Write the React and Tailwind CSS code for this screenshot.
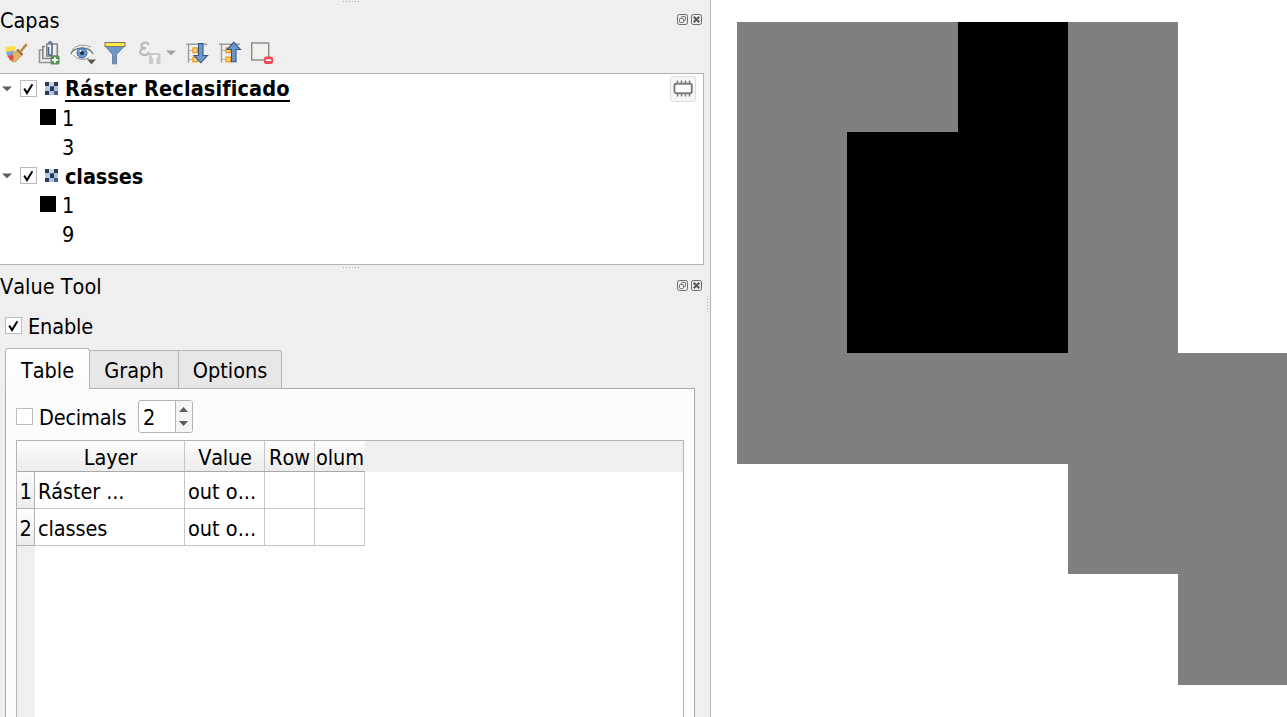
import React from "react";

const FONT = "font-['DejaVu_Sans_Condensed','DejaVu_Sans',sans-serif] [font-stretch:condensed] [font-kerning:none]";

function Check({ on }) {
  return (
    <span className="flex h-[17px] w-[17px] shrink-0 items-center justify-center border border-[#bcbcbc] bg-white">
      {on && (
        <svg width="15" height="15" viewBox="0 0 15 15">
          <path d="M3.2 7.6 L6 12 L11.4 3.2" fill="none" stroke="#000" strokeWidth="2" />
        </svg>
      )}
    </span>
  );
}

function RasterIcon() {
  const cells = [
    [0, 0, 4, 4, "#2e3a4e"], [4, 0, 5, 4, "#c3d5eb"], [9, 0, 4, 4, "#2e3a4e"],
    [0, 4, 5, 5, "#b3cae8"], [5, 5, 4, 4, "#2e3a4e"], [5, 4, 4, 1, "#53698a"], [9, 4, 4, 5, "#a9c3e4"],
    [0, 9, 4, 4, "#2e3a4e"], [4, 9, 5, 4, "#a9c3e4"], [9, 9, 4, 4, "#4a5f80"],
  ];
  return (
    <svg width="13" height="13" viewBox="0 0 13 13" className="shrink-0">
      {cells.map(([x, y, w, h, f], i) => (
        <rect key={i} x={x} y={y} width={w} height={h} fill={f} />
      ))}
    </svg>
  );
}

function DockButtons() {
  return (
    <div className="flex gap-[3px] pb-[2px]">
      <svg width="11" height="11" viewBox="0 0 11 11" fill="none" stroke="#6f6b67">
        <rect x=".5" y=".5" width="10" height="10" rx="1.8" />
        <rect x="4.5" y="2.5" width="4" height="4" rx=".8" />
        <rect x="2.5" y="4.5" width="4" height="4" rx=".8" fill="#efefef" />
      </svg>
      <svg width="11" height="11" viewBox="0 0 11 11" fill="none" stroke="#6f6b67">
        <rect x=".5" y=".5" width="10" height="10" rx="1.8" />
        <path d="M2.7 2.7 L8.3 8.3 M8.3 2.7 L2.7 8.3" stroke="#5e5a57" strokeWidth="2.1" />
      </svg>
    </div>
  );
}

function Grip({ vertical }) {
  return (
    <div className={vertical ? "flex flex-col gap-[2px]" : "flex gap-[2px] pr-[2px]"}>
      {[0, 1, 2, 3, 4, 5].map((i) => (
        <i key={i} className="block h-px w-px bg-[#a8a8a8]" />
      ))}
    </div>
  );
}

function Toolbar() {
  return (
    <div className="flex h-[38px] items-center pb-[2px] pl-1">
      <svg width="24" height="24" viewBox="0 0 24 24">
        <path d="M1 6 L11 5 L12 8 L9 11 L2 11Z" fill="#fbe04a" />
        <path d="M2 11 L10 9.5 L9 14 L3.5 15.5Z" fill="#7da7d8" />
        <path d="M3.5 15 L9 13.5 L11 18 L7 20 Q5 18 3.5 15Z" fill="#e8484c" />
        <path d="M8.5 13 L14 8.5 L18.5 13 L13 19.5 Q10 21.5 8 20.5 Q11 17 8.5 13Z" fill="#e5b56b" stroke="#c28b3e" strokeWidth=".8" />
        <path d="M13 8.5 L18.5 14" stroke="#8a6a40" strokeWidth="1.8" />
        <path d="M16.5 10.5 L22 4" stroke="#c18845" strokeWidth="2.6" strokeLinecap="round" />
      </svg>
      <svg width="24" height="26" viewBox="0 0 24 26" className="ml-[9px]" fill="none">
        <path d="M5 10 H2.5 V22.5 H15" stroke="#949494" strokeWidth="1.6" />
        <path d="M8 6.5 H5.8 V18.5 H18" stroke="#858585" strokeWidth="1.6" />
        <path d="M10 4 H20.3 V16 H9.8 V4 Z" stroke="#858585" strokeWidth="1.6" />
        <path d="M11.5 7 V14 Q13.3 16.6 15 14 V3.5 Q13 0 11.5 3.5" stroke="#44658e" strokeWidth="1.5" />
        <rect x="13.5" y="15.5" width="9" height="9" rx="1.5" fill="#59935a" />
        <path d="M18 17.2 V22.8 M15.2 20 H20.8" stroke="#fff" strokeWidth="1.8" />
      </svg>
      <svg width="27" height="24" viewBox="0 0 27 24" className="ml-[9px]" fill="none">
        <path d="M1 11 Q11 2 23 12 Q12 21 2 13Z" fill="#fafafa" />
        <path d="M1 13 Q2 8 12 7 Q20 7 23 13" stroke="#777" strokeWidth="1.3" />
        <path d="M2 9 Q9 1 21 6 M3 14 Q10 21 19 17" stroke="#999" strokeWidth="1" />
        <circle cx="12" cy="12" r="5" fill="#6b98ca" stroke="#416a9a" />
        <circle cx="12" cy="12" r="2.1" fill="#202f43" />
        <circle cx="10.5" cy="10" r="1" fill="#fff" />
        <path d="M17 18.5 H26 L21.5 23.2Z" fill="#555" />
      </svg>
      <svg width="22" height="24" viewBox="0 0 22 24" className="ml-[7px]">
        <path d="M1.5 5.5 L8.5 13.5 V22.8 H12.5 V13.5 L20 5.5Z" fill="#6b98c9" stroke="#6b7f98" />
        <rect x="1" y="1.5" width="20" height="4" fill="#fce94f" stroke="#7a746a" />
      </svg>
      <svg width="24" height="26" viewBox="0 0 24 26" className="ml-3">
        <path d="M11 5 Q9.5 2.2 6.8 2.6 Q3.4 3 3.4 5.6 Q3.4 8.3 8 8.3 Q2.4 8.3 2.2 11.8 Q2.2 14.8 6.3 15 Q9.8 15 11.2 12.2" fill="none" stroke="#b8b8b8" strokeWidth="2.1" />
        <rect x="11" y="13" width="11.5" height="11" rx="1.5" fill="#cacaca" />
        <path d="M13.5 15 H20 V16.5 L18.3 19 V24 H15.3 V19 L13.5 16.5Z" fill="#f3f3f3" />
      </svg>
      <svg width="10" height="6" viewBox="0 0 10 6" className="ml-[4px]">
        <path d="M0 .5 H10 L5 5.5Z" fill="#a2a2a2" />
      </svg>
      <TreeArrow dir="down" />
      <TreeArrow dir="up" />
      <svg width="24" height="24" viewBox="0 0 24 24" className="ml-[8px]">
        <rect x="1.7" y="2" width="17" height="17" fill="#f1f2ee" stroke="#888" strokeWidth="1.4" />
        <rect x="14" y="15.5" width="9" height="7.5" rx="2" fill="#ef4a50" />
        <path d="M15.8 19.2 H21.2" stroke="#fff" strokeWidth="1.8" />
      </svg>
    </div>
  );
}

function TreeArrow({ dir }) {
  return (
    <svg width="24" height="24" viewBox="0 0 24 24" className="ml-[9px]" fill="none">
      <path d="M1 3.2 H22 M3.5 4 V21.5" stroke="#9b9b9b" strokeWidth="1.4" />
      <path d="M4 9.5 H8 M4 18.5 H8" stroke="#b5b5b5" />
      <rect x="8" y="7" width="4.5" height="4.5" fill="#fbe08a" stroke="#f49a1a" strokeWidth="1.4" />
      <rect x="8" y="16.2" width="4.5" height="4.5" fill="#fbe08a" stroke="#f49a1a" strokeWidth="1.4" />
      {dir === "down" ? (
        <path d="M13.5 2.5 H18 V14.5 H22.5 L15.8 21.8 L9 14.5 H13.5Z" fill="#6d98c9" stroke="#35567e" strokeWidth="1.1" />
      ) : (
        <path d="M13.5 20.8 H18 V8.5 H22.5 L15.8 1.3 L9 8.5 H13.5Z" fill="#6d98c9" stroke="#35567e" strokeWidth="1.1" />
      )}
    </svg>
  );
}

function LayerRow({ children, right }) {
  return (
    <div className="flex h-[29px] items-center pl-[2px]">
      <svg width="10" height="6" viewBox="0 0 10 6">
        <path d="M0 .5 H10 L5 5.3Z" fill="#5c5c5c" />
      </svg>
      <span className="ml-2"><Check on /></span>
      <span className="ml-2 mr-[7px]"><RasterIcon /></span>
      {children}
      {right}
    </div>
  );
}

function ClassRow({ value, swatch }) {
  return (
    <div className="flex h-[29px] items-center pl-10">
      <span className={swatch ? "mb-px h-4 w-4 bg-black" : "h-4 w-4"} />
      <span className="ml-[6px] pt-[2px]">{value}</span>
    </div>
  );
}

function MemoryBadge() {
  return (
    <span className="ml-auto mr-[7px] flex h-[26px] w-[26px] items-center justify-center rounded-[3px] border border-[#dfdfdf] bg-[#f6f6f6]">
      <svg width="20" height="18" viewBox="0 0 20 18" fill="none" stroke="#7c7c7c">
        <path d="M4.5 .5 V4 M8.5 .5 V4 M12.5 .5 V4 M16.5 .5 V4 M4.5 13 V16.5 M8.5 13 V16.5 M12.5 13 V16.5 M16.5 13 V16.5" strokeWidth="1.5" />
        <rect x="1.5" y="3.8" width="17.3" height="9.4" rx="1.8" strokeWidth="1.9" fill="#fff" />
      </svg>
    </span>
  );
}

const HEAD = "bg-linear-to-b from-[#fdfdfd] to-[#ececec]";

function ValueTable() {
  const rows = [["1", "Ráster ..."], ["2", "classes"]];
  return (
    <div className="ml-[10px] mr-[10px] flex flex-1 flex-col border border-b-0 border-[#b4b4b4] bg-white">
      <div className="flex h-[31px] shrink-0 bg-[#efefef]">
        <div className={`grid w-[348px] grid-cols-[168px_80px_50px_50px] grid-rows-[30px] border-b border-[#a9a9a9] text-center leading-[33px] ${HEAD}`}>
          <div className="border-r border-[#c6c6c6] pl-5 tracking-[-0.1px]">Layer</div>
          <div className="border-r border-[#c6c6c6] pl-px tracking-[-0.2px]">Value</div>
          <div className="border-r border-[#c6c6c6]">Row</div>
          <div className="flex justify-center overflow-hidden tracking-[-0.1px]">olum</div>
        </div>
      </div>
      {rows.map(([n, name]) => (
        <div key={n} className="grid h-[37px] w-[348px] shrink-0 grid-cols-[18px_150px_80px_50px_50px] grid-rows-[37px] leading-[40px]">
          <div className={`border-b border-r border-[#b0b0b0] text-center tracking-[-0.5px] ${HEAD}`}>{n}</div>
          <div className="border-b border-r border-[#c6c6c6] pl-[3px] tracking-[-0.1px]">{name}</div>
          <div className="border-b border-r border-[#c6c6c6] pl-[3px]">out o...</div>
          <div className="border-b border-r border-[#c6c6c6]" />
          <div className="border-b border-r border-[#c6c6c6]" />
        </div>
      ))}
      <div className="w-[18px] flex-1 bg-[#efefef]" />
    </div>
  );
}

function MapCanvas() {
  const cells = ["ggkg.", "gkkg.", "gkkg.", "ggggg", "...gg", "....g"];
  return (
    <div className="flex-1 overflow-hidden bg-white pl-[26px] pt-[22px]">
      <div className="grid grid-cols-[110px_111px_110px_110px_109px] grid-rows-[110px_110px_111px_111px_110px_111px]">
        {cells.join("").split("").map((c, i) => (
          <div key={i} className={c === "k" ? "bg-black" : c === "." ? "bg-white" : "bg-[#7f7f7f]"} />
        ))}
      </div>
    </div>
  );
}

export default function App() {
  return (
    <div className={`flex h-[717px] w-[1287px] overflow-hidden bg-[#efefef] text-[21.5px] leading-none whitespace-nowrap text-black ${FONT}`}>
      <div className="flex w-[711px] shrink-0 border-r border-[#b4b4b4]">
        <div className="flex w-[704px] shrink-0 flex-col">
          <div className="flex h-[5px] justify-center pt-px"><Grip /></div>
          <div className="flex h-[30px] items-center justify-between pr-[2px]">
            <span className="pt-[2px]">Capas</span>
            <DockButtons />
          </div>
          <Toolbar />
          <div className="h-[192px] border border-l-0 border-[#b4b4b4] bg-white">
            <LayerRow right={<MemoryBadge />}>
              <span className="mt-[2px] border-b-2 border-black font-bold leading-[22px] tracking-[0.13px]">Ráster Reclasificado</span>
            </LayerRow>
            <ClassRow value="1" swatch />
            <ClassRow value="3" />
            <LayerRow>
              <span className="pt-[2px] font-bold tracking-[-0.1px]">classes</span>
            </LayerRow>
            <ClassRow value="1" swatch />
            <ClassRow value="9" />
          </div>
          <div className="flex h-[6px] justify-center pt-[2px]"><Grip /></div>
          <div className="flex h-[30px] items-center justify-between pr-[2px]">
            <span className="pt-[2px]">Value Tool</span>
            <DockButtons />
          </div>
          <div className="flex h-[47px] items-center gap-[6px] pl-[5px] pt-[2px]">
            <Check on />
            <span className="pt-[2px] tracking-[-0.15px]">Enable</span>
          </div>
          <div className="z-10 -mb-px flex h-[41px] items-end pl-[5px]">
            <div className="flex h-[41px] w-[85px] items-center justify-center rounded-t-[3px] border border-b-0 border-[#b4b4b4] bg-linear-to-b from-white to-[#fcfcfc] pt-[3px]">Table</div>
            <div className="flex h-[39px] w-[89px] items-center justify-center border border-l-0 border-[#b4b4b4] bg-[#e7e7e7] pt-[3px]">Graph</div>
            <div className="flex h-[39px] w-[103px] items-center justify-center rounded-tr-[3px] border border-l-0 border-[#b4b4b4] bg-[#e7e7e7] pt-[3px]">Options</div>
          </div>
          <div className="ml-[5px] flex w-[690px] flex-1 flex-col border border-b-0 border-[#a9a9a9] bg-[#fcfcfc]">
            <div className="flex h-[51px] items-center pl-[10px] pt-[4px]">
              <Check />
              <span className="ml-[6px] w-[99px] pt-[2px] tracking-[-0.2px]">Decimals</span>
              <span className="flex h-[33px] w-[55px] overflow-hidden rounded-[3px] border border-[#b4b4b4] bg-white">
                <span className="flex-1 pl-1 leading-[33px]">2</span>
                <span className="flex w-[17px] flex-col items-center justify-center gap-[9px] border-l border-[#b4b4b4] bg-[#f5f5f5] pr-px">
                  <svg width="9" height="5"><path d="M0 5 H9 L4.5 0Z" fill="#5c5c5c" /></svg>
                  <svg width="9" height="5"><path d="M0 0 H9 L4.5 5Z" fill="#5c5c5c" /></svg>
                </span>
              </span>
            </div>
            <ValueTable />
          </div>
        </div>
        <div className="flex flex-1 justify-center pl-px pt-[296px]"><Grip vertical /></div>
      </div>
      <MapCanvas />
    </div>
  );
}
